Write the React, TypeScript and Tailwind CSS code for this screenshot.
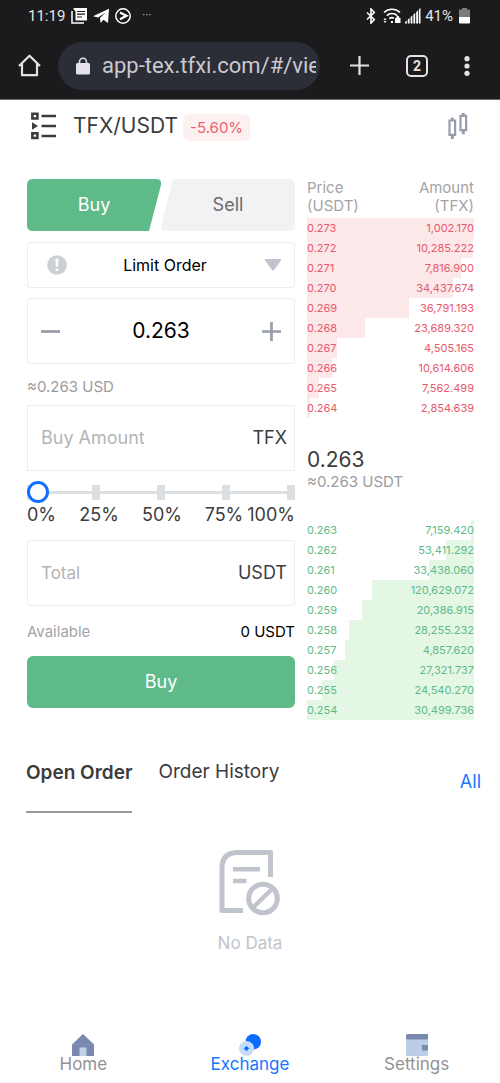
import { useState } from 'react';

const ASKS = [
  { price: '0.273', amount: '1,002.170', depth: 100 },
  { price: '0.272', amount: '10,285.222', depth: 99 },
  { price: '0.271', amount: '7,816.900', depth: 92 },
  { price: '0.270', amount: '34,437.674', depth: 87 },
  { price: '0.269', amount: '36,791.193', depth: 61 },
  { price: '0.268', amount: '23,689.320', depth: 35 },
  { price: '0.267', amount: '4,505.165', depth: 18 },
  { price: '0.266', amount: '10,614.606', depth: 15 },
  { price: '0.265', amount: '7,562.499', depth: 7 },
  { price: '0.264', amount: '2,854.639', depth: 2 },
];

const BIDS = [
  { price: '0.263', amount: '7,159.420', depth: 2 },
  { price: '0.262', amount: '53,411.292', depth: 17 },
  { price: '0.261', amount: '33,438.060', depth: 27 },
  { price: '0.260', amount: '120,629.072', depth: 61 },
  { price: '0.259', amount: '20,386.915', depth: 67 },
  { price: '0.258', amount: '28,255.232', depth: 75 },
  { price: '0.257', amount: '4,857.620', depth: 77 },
  { price: '0.256', amount: '27,321.737', depth: 84 },
  { price: '0.255', amount: '24,540.270', depth: 91 },
  { price: '0.254', amount: '30,499.736', depth: 100 },
];

function StatusBar() {
  return (
    <div className="flex h-8 items-center justify-between pl-7 pr-[30px] text-[15px] text-[#e6e6e6]">
      <div className="flex items-center gap-[6px]">
        <span>11:19</span>
        <svg className="h-4 w-4" viewBox="0 0 16 16" fill="none">
          <path d="M1 3v12h12" stroke="#fff" strokeWidth="1.5" />
          <path d="M2.5 0H16v12.5H4.5V3.5L2.5 1z" fill="#fff" />
          <path d="M6 3.5h8M6 6.2h8M6 9h5" stroke="#1b1b1d" strokeWidth="1.2" />
        </svg>
        <svg className="h-4 w-4" viewBox="0 0 16 16" fill="#fff">
          <path d="M0 8.2 16 .8 15 15l-4.600-3.200L7.600 15 7 10l5.500-5.500L5.200 9.600z" />
        </svg>
        <svg className="h-4 w-4" viewBox="0 0 16 16" fill="none" stroke="#fff">
          <circle cx="8" cy="8" r="7.200" strokeWidth="1.5" />
          <path d="m5 4.500 6.500 3.300L5 11.300" strokeWidth="2.200" />
        </svg>
        <svg className="ml-[6px] h-4 w-2" viewBox="0 0 8 16" fill="#999">
          <path d="M0 6h1.500v1.300H0zM3 6h1.500v1.300H3zM6 6h1.500v1.300H6z" />
        </svg>
      </div>
      <div className="flex items-center gap-1">
        <svg className="h-4 w-[10px]" viewBox="0 0 10 16" fill="none" stroke="#fff" strokeWidth="1.600">
          <path d="m1 4.500 7.300 7L5 15V1l3.300 3.500L1 11.500" />
        </svg>
        <svg className="ml-[3px] h-4 w-[18px]" viewBox="0 0 18 16" fill="none" stroke="#fff" strokeWidth="1.600">
          <path d="M1 4.500a11.500 11.500 0 0 1 16 0M3.800 7.600a7.500 7.500 0 0 1 10.400 0M6.300 10.600a3.800 3.800 0 0 1 4.600-.3" />
          <path d="M12 10h5.500v5H12zM13.300 10.500V9.200a1.500 1.500 0 0 1 3 0v1.300M8 13h2v2H8z" fill="#fff" stroke="none" />
          <path d="m.5 12 1.500-2 1.500 2zM.5 13l1.500 2 1.500-2z" fill="#fff" stroke="none" />
        </svg>
        <svg className="h-4 w-4" viewBox="0 0 16 16" fill="#fff">
          <path d="M0 14 1.800 12.500v3H0zM2.800 11.500l1.800-1.500v5.500H2.800zM5.600 9l1.800-1.600v8.100H5.600zM8.400 6.500l1.800-1.600v10.600H8.400zM11.200 4 13 2.400v13.100h-1.800z" />
          <path d="M13.800 1.500 15.500 0v15.500h-1.700z" />
        </svg>
        <span>41%</span>
        <svg className="ml-[2px] h-4 w-[11px]" viewBox="0 0 11 16">
          <path d="M3 0h5v1.500h3V9H0V1.500h3z" fill="#7b7b7d" />
          <path d="M0 9h11v5.500a1 1 0 0 1-1 1H1a1 1 0 0 1-1-1z" fill="#fff" />
        </svg>
      </div>
    </div>
  );
}

function BrowserBar() {
  return (
    <div className="flex h-[67px] items-center pl-[18px] pr-[30px]">
      <button type="button" aria-label="Browser home">
        <svg className="h-[23px] w-[23px]" viewBox="0 0 23 23" fill="none" stroke="#e3e3e3" strokeWidth="2.200">
          <path d="M1 12 11.500 1.700 22 12M4 9.500v11.700h15V9.500" strokeLinejoin="round" />
        </svg>
      </button>
      <div className="ml-[17px] flex h-12 min-w-0 flex-1 items-center rounded-full bg-[#2b2d37] pl-[18px] pr-1">
        <svg className="h-[18px] w-[14px] shrink-0" viewBox="0 0 14 18">
          <path d="M3.500 8V4.800a3.500 3.500 0 0 1 7 0V8" fill="none" stroke="#e5e1ec" strokeWidth="1.600" />
          <rect x="0" y="6" width="14" height="11.500" rx="1.500" fill="#e5e1ec" />
        </svg>
        <input
          className="ml-3 w-full min-w-0 bg-transparent text-[22px] text-[#cbc8d1] outline-none"
          aria-label="Address"
          readOnly
          value="app-tex.tfxi.com/#/vie"
        />
      </div>
      <button type="button" aria-label="New tab" className="ml-[30px]">
        <svg className="h-[19px] w-[19px]" viewBox="0 0 19 19" stroke="#e3e3e3" strokeWidth="2.200">
          <path d="M9.500 0v19M0 9.500h19" />
        </svg>
      </button>
      <button
        type="button"
        aria-label="Open tabs"
        className="ml-[37px] flex h-[22px] w-[22px] items-center justify-center rounded-[5px] border-2 border-[#e3e3e3] text-sm font-bold text-[#e3e3e3]"
      >
        2
      </button>
      <button type="button" aria-label="Menu" className="ml-9">
        <svg className="h-5 w-[6px]" viewBox="0 0 6 20" fill="#e3e3e3">
          <circle cx="3" cy="2.700" r="2.600" />
          <circle cx="3" cy="10" r="2.600" />
          <circle cx="3" cy="17.300" r="2.600" />
        </svg>
      </button>
    </div>
  );
}

function PairHeader() {
  return (
    <header className="flex h-[52px] items-center pl-[31px] pr-8">
      <button type="button" aria-label="Markets">
        <svg className="h-7 w-[26px]" viewBox="0 0 26 28" fill="none" stroke="#3c3c3e">
          <path d="M1.400 1.700h5v4.800h-5zM1.400 21.200h5V26h-5z" strokeWidth="2.600" />
          <path d="M10.500 4H25M10.500 14H25M10.500 24H25" strokeWidth="2.400" />
          <path d="m1 10.300 6 3.700-6 3.700z" fill="#3c3c3e" stroke="none" />
        </svg>
      </button>
      <h1 className="ml-4 text-[21px] text-[#3c3c3e]">TFX/USDT</h1>
      <span className="ml-[5px] mt-[3px] rounded-md bg-[#fdf0f0] px-[7px] text-[15px] leading-[27px] text-[#f0616d]">
        -5.60%
      </span>
      <button type="button" aria-label="Chart" className="ml-auto">
        <svg className="h-[26px] w-5" viewBox="0 0 20 26" fill="none" stroke="#979dab" strokeWidth="2.200">
          <path d="M1.500 7.500h5.600v14.300H1.500zM12.500 2.800h5.600v14.400h-5.600z" />
          <path d="M4.300 4.500v3M4.300 22v4M15.300 0v2.800M15.300 17.200v4" strokeWidth="3" />
        </svg>
      </button>
    </header>
  );
}

function SideTabs() {
  return (
    <div className="grid h-[52px] grid-cols-2">
      <button type="button" className="relative text-lg text-white">
        <svg className="absolute inset-0 h-full w-full" viewBox="0 0 134 52" preserveAspectRatio="none" fill="#5fba89">
          <path d="M6 0H129Q135 0 134 6L122 52H6Q0 52 0 46V6Q0 0 6 0z" />
        </svg>
        <span className="relative">Buy</span>
      </button>
      <button type="button" className="relative text-lg text-[#6b6b6d]">
        <svg className="absolute inset-0 h-full w-full" viewBox="0 0 134 52" preserveAspectRatio="none" fill="#f1f2f4">
          <path d="M12 0H128Q134 0 134 6V46Q134 52 128 52H6Q-1 52 .5 46z" />
        </svg>
        <span className="relative">Sell</span>
      </button>
    </div>
  );
}

function PercentSlider() {
  const [percent, setPercent] = useState(0);

  return (
    <div className="pt-[10px]">
      <div className="relative h-[22px]">
        <div className="absolute inset-0 flex items-center">
          <div className="h-[3px] w-full bg-[#dcdfe2]" />
        </div>
        <div className="absolute inset-0 flex items-center justify-between">
          {[0, 25, 50, 75, 100].map((stop) => (
            <div key={stop} className="h-[15px] w-2 bg-[#dcdfe2]" />
          ))}
        </div>
        <input
          type="range"
          aria-label="Percent of balance"
          min={0}
          max={100}
          value={percent}
          onChange={(e) => setPercent(Number(e.target.value))}
          className="absolute inset-0 h-full w-full appearance-none bg-transparent [&::-webkit-slider-thumb]:h-[22px] [&::-webkit-slider-thumb]:w-[22px] [&::-webkit-slider-thumb]:appearance-none [&::-webkit-slider-thumb]:rounded-full [&::-webkit-slider-thumb]:border-[3px] [&::-webkit-slider-thumb]:border-[#0f6fff] [&::-webkit-slider-thumb]:bg-white"
        />
      </div>
      <div className="grid grid-cols-[5fr_6fr_6fr_auto_auto] text-lg leading-[24px] text-[#3c3c3e]">
        <span>0%</span>
        <span>25%</span>
        <span>50%</span>
        <span className="pr-1">75%</span>
        <span>100%</span>
      </div>
    </div>
  );
}

function OrderForm() {
  const [price, setPrice] = useState('0.263');
  const step = (by: number) => setPrice((Number(price) + by).toFixed(3));

  return (
    <form onSubmit={(e) => e.preventDefault()}>
      <SideTabs />

      <div className="relative mt-[11px] h-[46px] rounded-[3px] border border-[#ededee]">
        <select
          aria-label="Order type"
          className="h-full w-full appearance-none bg-transparent pl-2 text-center text-base text-black outline-none"
        >
          <option>Limit Order</option>
          <option>Market Order</option>
        </select>
        <svg className="pointer-events-none absolute left-[19px] top-3 h-5 w-5" viewBox="0 0 20 20">
          <circle cx="10" cy="10" r="9.800" fill="#cdd0d3" />
          <path d="M8.500 3.800h3l-.4 8H8.900z" fill="#fff" />
          <circle cx="10" cy="14.800" r="1.500" fill="#fff" />
        </svg>
        <svg className="pointer-events-none absolute right-3 top-4 h-3 w-[18px]" viewBox="0 0 18 12" fill="#c0c4cc">
          <path d="M2 0h14q2 0 1 1.500L10 11q-1 1-2 0L1 1.500Q0 0 2 0z" />
        </svg>
      </div>

      <div className="mt-[10px] flex h-[66px] items-center rounded-[3px] border border-[#ededee] px-[13px]">
        <button type="button" aria-label="Lower price" onClick={() => step(-0.001)}>
          <svg className="h-[19px] w-[19px]" viewBox="0 0 18 18" stroke="#979dab" strokeWidth="2.600">
            <path d="M0 9h18" />
          </svg>
        </button>
        <input
          aria-label="Price"
          value={price}
          onChange={(e) => setPrice(e.target.value)}
          className="w-full min-w-0 bg-transparent text-center text-[21px] text-black outline-none"
        />
        <button type="button" aria-label="Raise price" onClick={() => step(0.001)}>
          <svg className="h-[19px] w-[19px]" viewBox="0 0 18 18" stroke="#979dab" strokeWidth="2.600">
            <path d="M0 9h18M9 0v18" />
          </svg>
        </button>
      </div>

      <p className="pb-[9px] pt-[14px] text-[15px] leading-[18px] text-[#9c9c9e]">≈0.263 USD</p>

      <label className="flex h-[66px] items-center border border-[#ededee] pl-[13px] pr-[7px] text-lg text-[#3c3c3e]">
        <input
          placeholder="Buy Amount"
          className="w-full min-w-0 bg-transparent outline-none placeholder:text-[#b4b4b6]"
        />
        TFX
      </label>

      <PercentSlider />

      <label className="mt-[13px] flex h-[66px] items-center rounded-[3px] border border-[#ededee] pl-[13px] pr-[7px] text-lg text-[#3c3c3e]">
        <input
          placeholder="Total"
          className="w-full min-w-0 bg-transparent text-[17px] outline-none placeholder:text-[#b4b4b6]"
        />
        USDT
      </label>

      <div className="flex justify-between pb-[15px] pt-[17px] text-[15px] leading-[18px]">
        <span className="text-[#a4a4a6]">Available</span>
        <span className="text-black">0 USDT</span>
      </div>

      <button type="submit" className="h-[52px] w-full rounded-md bg-[#5fba89] text-lg text-white">
        Buy
      </button>
    </form>
  );
}

function bar(side: 'right' | 'left', color: string, depth: number) {
  return { background: `linear-gradient(to ${side}, ${color} ${depth}%, transparent ${depth}%)` };
}

function OrderBook() {
  return (
    <section>
      <table className="w-full text-[11px] text-[#e8596b]">
        <thead>
          <tr className="h-[39px] align-top text-[15px] leading-[18px] text-[#a4a4a6]">
            <th className="text-left font-normal">
              Price
              <br />
              (USDT)
            </th>
            <th className="text-right font-normal">
              Amount
              <br />
              (TFX)
            </th>
          </tr>
        </thead>
        <tbody>
          {ASKS.map((row) => (
            <tr key={row.price} className="h-5 leading-5" style={bar('right', '#fce8e9', row.depth)}>
              <td>{row.price}</td>
              <td className="text-right">{row.amount}</td>
            </tr>
          ))}
        </tbody>
      </table>

      <div className="pb-[29px] pt-[29px]">
        <p className="text-[21px] leading-[26px] text-[#3c3c3e]">0.263</p>
        <p className="text-[15px] leading-[18px] text-[#9c9c9e]">≈0.263 USDT</p>
      </div>

      <table className="w-full text-[11px] text-[#5fba89]">
        <tbody>
          {BIDS.map((row) => (
            <tr key={row.price} className="h-5 leading-5" style={bar('left', '#e3f7e4', row.depth)}>
              <td>{row.price}</td>
              <td className="text-right">{row.amount}</td>
            </tr>
          ))}
        </tbody>
      </table>
    </section>
  );
}

function Orders() {
  return (
    <section className="mt-[38px]">
      <div className="flex items-start pl-[26px] pr-[19px] text-[19px] leading-7 text-[#3c3c3e]">
        <button type="button" className="h-[55px] border-b-2 border-[#98989a] pb-[23px] font-semibold">
          Open Order
        </button>
        <button type="button" className="ml-[26px]">
          Order History
        </button>
        <a href="#all" className="ml-auto mt-[10px] text-lg leading-7 text-[#1677ff]">
          All
        </a>
      </div>
      <div className="flex flex-col items-center pt-[37px]">
        <svg className="h-[66px] w-[62px]" viewBox="0 0 62 66" fill="none" stroke="#c0c4cc">
          <path d="M51.500 27V2.500H18Q3 3 3 18V60.500H24" strokeWidth="5" strokeLinejoin="round" />
          <path d="M14 19.300h27M14 31h13.500" strokeWidth="4.500" />
          <circle cx="44" cy="48.500" r="14.300" strokeWidth="5" />
          <path d="M34.500 57 52 40" strokeWidth="4.500" />
        </svg>
        <p className="mt-4 text-[17px] leading-[22px] text-[#c0c4cc]">No Data</p>
      </div>
    </section>
  );
}

function TabBar() {
  return (
    <nav className="mt-auto grid grid-cols-3 pb-[11px] text-[17px] leading-4 text-[#929294]">
      <a href="#home" className="flex flex-col items-center">
        <svg className="h-[22px] w-[22px]" viewBox="0 0 22 22">
          <path d="M11 0 22 10.500V22H0V10.500z" fill="#7988ae" />
          <path d="M0 10.500h22" stroke="#8c9abc" strokeWidth=".6" />
          <path d="M7.500 13.500h7V22h-7z" fill="#c0d0e9" />
        </svg>
        Home
      </a>
      <a href="#exchange" className="flex flex-col items-center text-[#1677ff]">
        <svg className="h-[22px] w-[22px]" viewBox="0 0 22 22">
          <circle cx="14.300" cy="7.700" r="7.700" fill="#0a6cff" />
          <circle cx="7.500" cy="14.500" r="7.500" fill="#c7dcfb" />
          <path d="M7.500 12.300 9.700 14.500 7.500 16.700 5.300 14.500z" fill="#0a6cff" stroke="#0a6cff" strokeLinejoin="round" />
        </svg>
        Exchange
      </a>
      <a href="#settings" className="flex flex-col items-center">
        <svg className="h-[22px] w-[22px]" viewBox="0 0 22 22">
          <path d="M0 2h22v19a1 1 0 0 1-1 1H1a1 1 0 0 1-1-1z" fill="#bccde7" />
          <path d="M1.500 0H22v5.500H1.500Q0 5.500 0 4V1.500Q0 0 1.500 0zM16 11h6v5.500h-6z" fill="#7988ae" />
        </svg>
        Settings
      </a>
    </nav>
  );
}

export default function App() {
  return (
    <div className="flex min-h-screen flex-col bg-white font-['Inter',sans-serif]">
      <div className="border-b border-[#6b6873] bg-[#1b1b1d] font-['Roboto',sans-serif]">
        <StatusBar />
        <BrowserBar />
      </div>
      <PairHeader />
      <main className="mt-[27px] grid grid-cols-[1fr_167px] gap-x-3 pl-[27px] pr-[26px]">
        <OrderForm />
        <OrderBook />
      </main>
      <Orders />
      <TabBar />
    </div>
  );
}
